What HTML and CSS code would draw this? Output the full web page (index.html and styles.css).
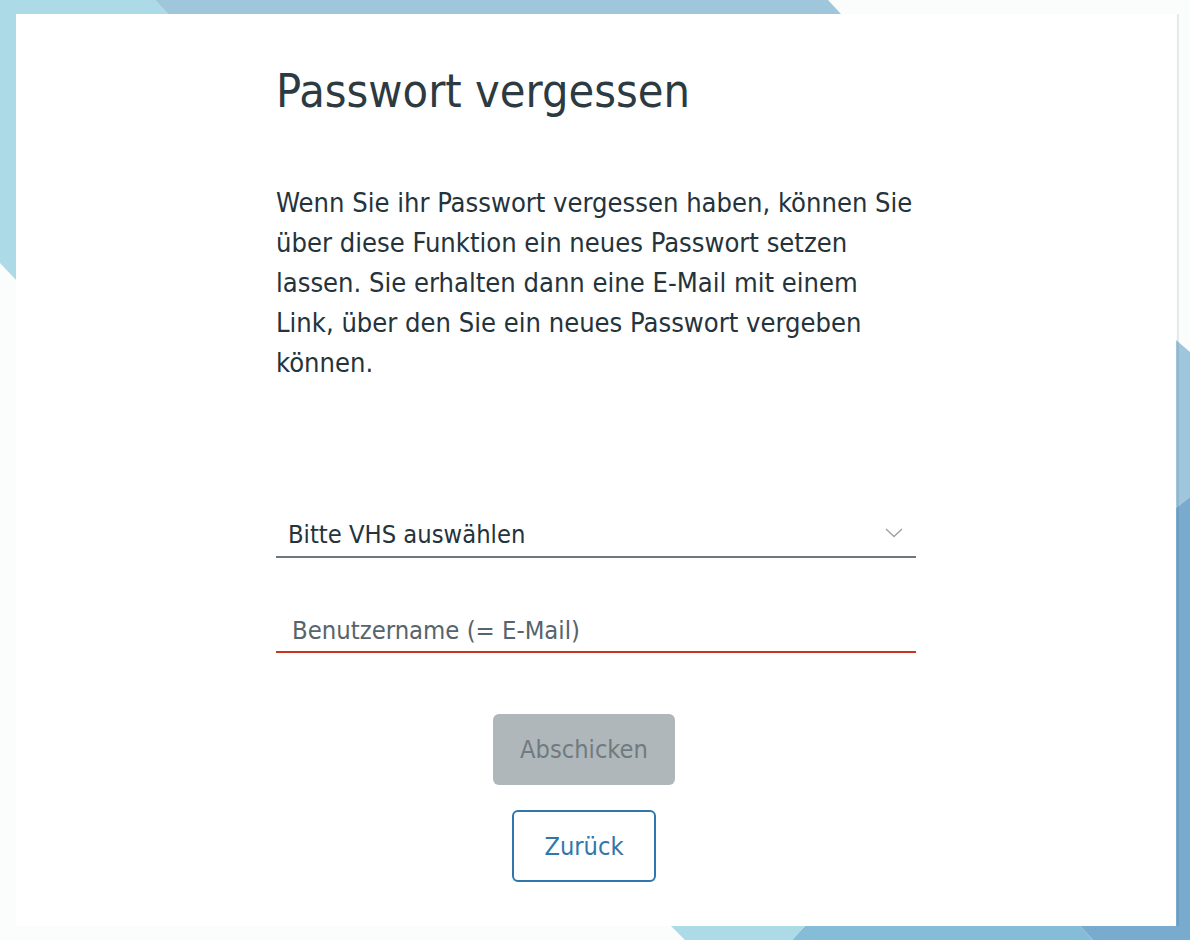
FILE: index.html
```html
<!DOCTYPE html>
<html lang="de">
<head>
<meta charset="utf-8">
<title>Passwort vergessen</title>
<link rel="stylesheet" href="styles.css">
</head>
<body>
<svg class="bg" width="1190" height="940" viewBox="0 0 1190 940" aria-hidden="true">
  <rect x="0" y="0" width="1190" height="940" fill="#fbfdfd"/>
  <polygon points="0,0 155,0 168,14 16,14 16,280 0,263" fill="#acdbe7"/>
  <polygon points="155,0 828,0 841,14 168,14" fill="#a0c6dc"/>
  <polygon points="1176,340 1190,352 1190,497 1176,508" fill="#9fc6dc"/>
  <polygon points="1176,508 1190,497 1190,940 1093,940 1080,926 1176,926" fill="#79abce"/>
  <polygon points="805,926 1080,926 1093,940 792,940" fill="#85bdd8"/>
  <polygon points="671,926 805,926 792,940 685,940" fill="#acdbe7"/>
</svg>
<main class="card">
  <div class="content">
    <h1 class="title">Passwort vergessen</h1>
    <p class="intro">Wenn Sie ihr Passwort vergessen haben, können Sie über diese Funktion ein neues Passwort setzen lassen. Sie erhalten dann eine E-Mail mit einem Link, über den Sie ein neues Passwort vergeben können.</p>
    <div class="select-wrap">
      <select class="select">
        <option>Bitte VHS auswählen</option>
      </select>
      <svg class="chevron" width="18" height="10" viewBox="0 0 18 10" aria-hidden="true"><path d="M1 1 L9 8.5 L17 1" fill="none" stroke="#a3a3a3" stroke-width="1.5"/></svg>
    </div>
    <input class="field" type="text" placeholder="Benutzername (= E-Mail)">
    <div class="actions">
      <button class="btn btn-submit" type="button" disabled>Abschicken</button>
      <button class="btn btn-back" type="button">Zurück</button>
    </div>
  </div>
</main>
</body>
</html>
```
FILE: styles.css
```css
html, body {
  margin: 0;
  padding: 0;
}
body {
  width: 1190px;
  height: 940px;
  overflow: hidden;
  position: relative;
  background: #fbfdfd;
  font-family: "DejaVu Sans Condensed", "DejaVu Sans", sans-serif;
  font-stretch: condensed;
  color: #2d3b43;
}
.bg {
  position: absolute;
  left: 0;
  top: 0;
  z-index: 0;
}
.card {
  position: relative;
  z-index: 1;
  margin: 14px 0 0 16px;
  width: 1160px;
  height: 912px;
  background: #ffffff;
  display: flex;
  justify-content: center;
}
.card::after {
  content: "";
  position: absolute;
  top: 0;
  bottom: 0;
  right: -3px;
  width: 2px;
  background: rgba(0, 0, 0, 0.08);
}
.content {
  width: 640px;
  padding-top: 50px;
  display: flex;
  flex-direction: column;
}
.title {
  margin: 0;
  font-size: 46.5px;
  line-height: 54px;
  font-weight: normal;
  color: #2c3a42;
}
.intro {
  margin: 65px 0 0;
  font-size: 27.1px;
  line-height: 40px;
  color: #25333b;
}
.select-wrap {
  position: relative;
  margin-top: 131px;
}
.select {
  display: block;
  width: 100%;
  height: 44px;
  margin: 0;
  padding: 0 0 0 12px;
  border: none;
  border-bottom: 2px solid #6c767c;
  background: transparent;
  -webkit-appearance: none;
  appearance: none;
  font: inherit;
  font-size: 25.3px;
  line-height: 42px;
  color: #25333b;
  outline: none;
}
.chevron {
  position: absolute;
  left: 609px;
  top: 14px;
}
.field {
  display: block;
  box-sizing: border-box;
  width: 100%;
  height: 44px;
  margin: 51px 0 0;
  padding: 0 0 0 16px;
  border: none;
  border-bottom: 2px solid #c8361f;
  background: transparent;
  font: inherit;
  font-size: 25.4px;
  line-height: 42px;
  color: #25333b;
  outline: none;
}
.field::placeholder {
  color: #56646b;
  opacity: 1;
}
.actions {
  margin-top: 61px;
  padding-right: 24px;
  display: flex;
  flex-direction: column;
  align-items: center;
  gap: 25px;
}
.btn {
  box-sizing: border-box;
  height: 72px;
  border-radius: 6px;
  font: inherit;
  font-size: 25.2px;
  margin: 0;
}
.btn-submit {
  width: 182px;
  height: 71px;
  border: none;
  background: #b0b7ba;
  color: #6f7b81;
}
.btn-back {
  width: 144px;
  border: 2px solid #2f77ab;
  background: #ffffff;
  color: #2f77ab;
}
```
